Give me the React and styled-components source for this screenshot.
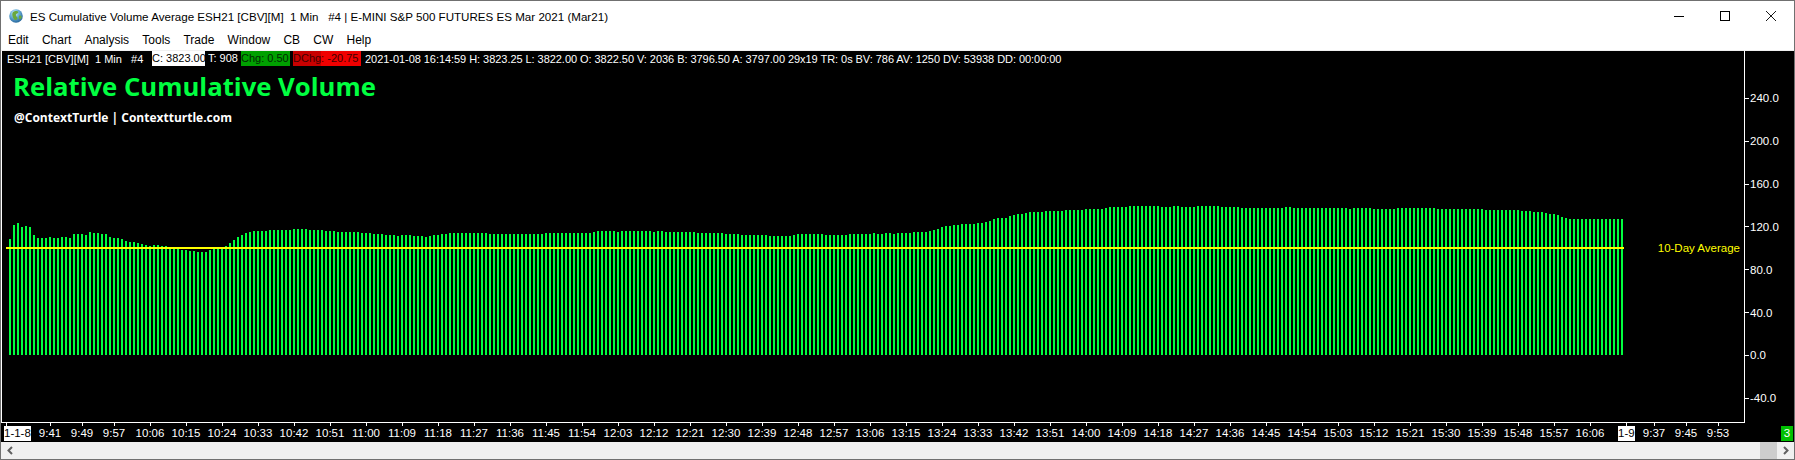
import React from "react"
import styled, { createGlobalStyle } from "styled-components"

const Global = createGlobalStyle`
html, body { margin: 0; padding: 0; background: #fff; overflow: hidden; }
`

// bar tops on the page, as [y, how many bars]
const RUNS = [
  [239,1],[225,1],[223,1],[227,1],[226,1],[227,1],[235,1],[238,3],[237,1],[238,2],[237,2],[238,1],[234,3],[235,1],[232,1],[233,2],[234,2],[237,1],[238,2],[239,1],[241,1],[242,2],[243,1],[244,1],[245,1],[246,1],[245,2],[246,2],[249,3],[250,2],[251,2],[252,3],[250,1],[248,3],[246,1],[243,1],[240,1],[237,1],[235,1],[233,1],[232,1],[231,4],[230,6],[229,2],
  [229,2],[230,4],[231,3],[232,6],[233,3],[234,3],[235,3],[236,1],[235,3],[236,3],[237,1],[236,1],[235,2],[234,2],[233,10],[234,14],[233,12],[232,1],[231,1],
  [231,4],[232,1],[231,8],[232,1],[231,2],[232,8],[233,7],[234,4],[235,7],[236,6],[235,1],[234,7],[235,6],[234,6],[233,1],[234,2],[233,2],[234,1],[233,1],
  [233,3],[232,4],[231,1],[230,1],[229,1],[227,1],[226,2],[225,2],[224,4],[223,2],[222,1],[221,1],[219,1],[218,3],[216,1],[215,1],[214,2],[213,1],[212,4],[211,5],[210,5],[209,5],[208,1],[207,5],[206,3],
  [206,5],[207,3],[206,2],[207,4],[206,6],[207,5],[208,11],[207,2],[208,14],[209,1],[208,5],[209,2],
  [209,4],[208,10],[209,12],[210,9],[211,3],[212,3],[213,1],[214,2],[215,1],[217,1],[218,1],[219,14],
]
const BAR_TOPS = RUNS.flatMap(([y, n]) => Array(n).fill(y))

const MENU = ["Edit", "Chart", "Analysis", "Tools", "Trade", "Window", "CB", "CW", "Help"]
const Y_LABELS = ["240.0", "200.0", "160.0", "120.0", "80.0", "40.0", "0.0", "-40.0"]
const TIMES = ["10:06","10:15","10:24","10:33","10:42","10:51","11:00","11:09","11:18","11:27","11:36","11:45","11:54","12:03","12:12","12:21","12:30","12:39","12:48","12:57","13:06","13:15","13:24","13:33","13:42","13:51","14:00","14:09","14:18","14:27","14:36","14:45","14:54","15:03","15:12","15:21","15:30","15:39","15:48","15:57","16:06"]

const Frame = styled.div`
width: 1795px;
height: 460px;
box-sizing: border-box;
border: 1px solid #707070;
display: flex;
flex-direction: column;
background: #fff;
overflow: hidden;
`
const TitleBar = styled.div`
height: 29px;
display: flex;
align-items: center;
padding-left: 8px;
font: 11.6px "Liberation Sans", sans-serif;
color: #000;
white-space: pre;
`
const TitleText = styled.span`
margin-left: 7px;
padding-top: 1px;
flex: 1;
`
const WinButton = styled.div`
width: 46px;
height: 29px;
display: flex;
align-items: center;
justify-content: center;
`
const MenuBar = styled.div`
height: 20px;
display: flex;
align-items: center;
padding-left: 7px;
gap: 13.2px;
font: 12px "Liberation Sans", sans-serif;
color: #000;
border-bottom: 1px solid #f0f0f0;
`
const Main = styled.div`
display: flex;
background: #000;
height: 372px;
`
const Plot = styled.div`
position: relative;
width: 1742px;
height: 371px;
border-left: 1px solid #fff;
border-right: 1px solid #fff;
border-bottom: 1px solid #fff;
`
const Chart = styled.svg`
display: block;
`
const Hud = styled.div`
position: absolute;
left: 0;
top: 0;
right: 0;
color: #fff;
`
const Status = styled.div`
display: flex;
height: 15px;
align-items: center;
padding-left: 5px;
font: 11px "Liberation Sans", sans-serif;
white-space: pre;
`
const Symbol = styled.span`
width: 145px;
flex: none;
`
const Chunk = styled.span`
background: ${p => p.$bg};
color: ${p => p.$fg};
width: ${p => p.$w}px;
margin-left: ${p => p.$ml || 0}px;
height: 15px;
line-height: 15px;
overflow: hidden;
flex: none;
`
const Quote = styled.span`
margin-left: 4px;
letter-spacing: -0.05px;
`
const Headline = styled.div`
margin: 4px 0 0 11px;
font: bold 25.7px "Open Sans", sans-serif;
line-height: 33px;
color: #00ff40;
white-space: pre;
`
const Credit = styled.div`
margin: 6px 0 0 12px;
font: bold 12px "Open Sans", sans-serif;
line-height: 18px;
color: #fff;
white-space: pre;
`
const AvgLabel = styled.div`
position: absolute;
right: 4px;
top: 189px;
font: 11.5px "Liberation Sans", sans-serif;
line-height: 16px;
color: #ffff00;
white-space: pre;
`
const YAxis = styled.div`
width: 49px;
padding-top: 26px;
display: flex;
flex-direction: column;
font: 11.5px "Liberation Sans", sans-serif;
color: #fff;
`
const YTick = styled.div`
height: 42.85px;
display: flex;
align-items: center;
&::before {
  content: "";
  width: 4px;
  height: 1px;
  background: #fff;
  margin-right: 1px;
}
`
const XAxis = styled.div`
display: flex;
background: #000;
height: 19px;
color: #fff;
font: 11.5px "Liberation Sans", sans-serif;
`
const XCell = styled.div`
position: relative;
flex: none;
width: ${p => p.$w}px;
margin-left: ${p => p.$ml || 0}px;
height: 19px;
display: flex;
justify-content: center;
align-items: flex-end;
padding-bottom: 1px;
box-sizing: border-box;
line-height: 15px;
&::before {
  content: "";
  position: absolute;
  top: 0;
  left: ${p => p.$tick === undefined ? "50%" : p.$tick + "px"};
  width: 1px;
  height: 3px;
  background: #fff;
}
`
const DateFlag = styled.span`
background: #fff;
color: #000;
display: block;
width: ${p => p.$w}px;
height: 15px;
overflow: hidden;
white-space: pre;
`
const Badge = styled.div`
margin: 3px 0 0 auto;
width: 12px;
height: 15px;
margin-right: 1px;
background: #00c000;
color: #fff;
text-align: center;
line-height: 15px;
`
const ScrollBar = styled.div`
flex: 1;
display: flex;
align-items: center;
background: #f0f0f0;
`
const ScrollArrow = styled.div`
width: 17px;
height: 17px;
display: flex;
align-items: center;
justify-content: center;
`
const ScrollTrack = styled.div`
flex: 1;
`
const ScrollThumb = styled.div`
width: 17px;
height: 17px;
background: #cdcdcd;
`

function Globe(){
    return (
        <svg width="14" height="14" viewBox="0 0 14 14">
            <defs>
                <radialGradient id="globe" cx="0.4" cy="0.3" r="0.75">
                    <stop offset="0" stopColor="#e8f7ff"/>
                    <stop offset="0.4" stopColor="#6fb4dc"/>
                    <stop offset="1" stopColor="#1f5f96"/>
                </radialGradient>
            </defs>
            <circle cx="7" cy="7" r="6.8" fill="url(#globe)"/>
            <path d="M3.500 4c1-1.700 3.300-2.300 5-1.700s.5 2-.8 2.500-1 2.200.3 3.300 0 3-1.500 3S2.500 6.500 3.500 4z" fill="#6aa83c"/>
            <path d="M10.500 6.500c1-.4 2.200.3 2.200 1.500s-1 2.500-2 2.300-1.200-3.400-.2-3.800z" fill="#6aa83c"/>
        </svg>
    )
}

function Bars(){
    return (
        <Chart width="1742" height="371" shapeRendering="crispEdges">
            {BAR_TOPS.map((top, i) => (
                <rect key={i} x={7 + i * 4} y={top - 51} width="2" height={355 - top} fill="#00ff40"/>
            ))}
            <rect x="4" y="196" width="1618" height="2" fill="#ffff00"/>
        </Chart>
    )
}

export default function App(){
    return (
        <Frame>
            <Global/>
            <TitleBar>
                <Globe/>
                <TitleText>ES Cumulative Volume Average ESH21 [CBV][M]  1 Min   #4 | E-MINI S&amp;P 500 FUTURES ES Mar 2021 (Mar21)</TitleText>
                <WinButton>
                    <svg width="10" height="10" viewBox="0 0 10 10"><path d="M0 5.500h10" stroke="#000"/></svg>
                </WinButton>
                <WinButton>
                    <svg width="10" height="10" viewBox="0 0 10 10"><rect x="0.500" y="0.500" width="9" height="9" fill="none" stroke="#000"/></svg>
                </WinButton>
                <WinButton>
                    <svg width="10" height="10" viewBox="0 0 10 10"><path d="M0 0l10 10M10 0L0 10" stroke="#000" strokeWidth="0.9"/></svg>
                </WinButton>
            </TitleBar>
            <MenuBar>
                {MENU.map(m => <span key={m}>{m}</span>)}
            </MenuBar>
            <Main>
                <Plot>
                    <Bars/>
                    <Hud>
                        <Status>
                            <Symbol>ESH21 [CBV][M]  1 Min   #4</Symbol>
                            <Chunk $bg="#fff" $fg="#000" $w={53}>C: 3823.00</Chunk>
                            <Chunk $bg="transparent" $fg="#fff" $w={33} $ml={3}>T: 908</Chunk>
                            <Chunk $bg="#00a000" $fg="#002800" $w={49}>Chg: 0.50</Chunk>
                            <Chunk $bg="linear-gradient(90deg, #c80000 28px, #f00000 28px)" $fg="#400000" $w={68} $ml={3}>DChg: -20.75</Chunk>
                            <Quote>2021-01-08 16:14:59 H: 3823.25 L: 3822.00 O: 3822.50 V: 2036 B: 3796.50 A: 3797.00 29x19 TR: 0s BV: 786 AV: 1250 DV: 53938 DD: 00:00:00</Quote>
                        </Status>
                        <Headline>Relative Cumulative Volume</Headline>
                        <Credit>@ContextTurtle | Contextturtle.com</Credit>
                    </Hud>
                    <AvgLabel>10-Day Average</AvgLabel>
                </Plot>
                <YAxis>
                    {Y_LABELS.map(l => <YTick key={l}>{l}</YTick>)}
                </YAxis>
            </Main>
            <XAxis>
                <XCell $w={33} $tick={5}><DateFlag $w={27}>1-1-8</DateFlag></XCell>
                <XCell $w={32}>9:41</XCell>
                <XCell $w={32}>9:49</XCell>
                <XCell $w={32}>9:57</XCell>
                {TIMES.map((t, i) => <XCell key={t} $w={36} $ml={i === 0 ? 2 : 0}>{t}</XCell>)}
                <XCell $w={17} $ml={10} $tick={8}><DateFlag $w={17}>1-9</DateFlag></XCell>
                <XCell $w={32} $ml={3}>9:37</XCell>
                <XCell $w={32}>9:45</XCell>
                <XCell $w={32}>9:53</XCell>
                <Badge>3</Badge>
            </XAxis>
            <ScrollBar>
                <ScrollArrow>
                    <svg width="8" height="9" viewBox="0 0 8 9"><path d="M6 1L2.500 4.500 6 8" fill="none" stroke="#606060" strokeWidth="2"/></svg>
                </ScrollArrow>
                <ScrollTrack/>
                <ScrollThumb/>
                <ScrollArrow>
                    <svg width="8" height="9" viewBox="0 0 8 9"><path d="M2 1l3.500 3.500L2 8" fill="none" stroke="#606060" strokeWidth="2"/></svg>
                </ScrollArrow>
            </ScrollBar>
        </Frame>
    )
}
